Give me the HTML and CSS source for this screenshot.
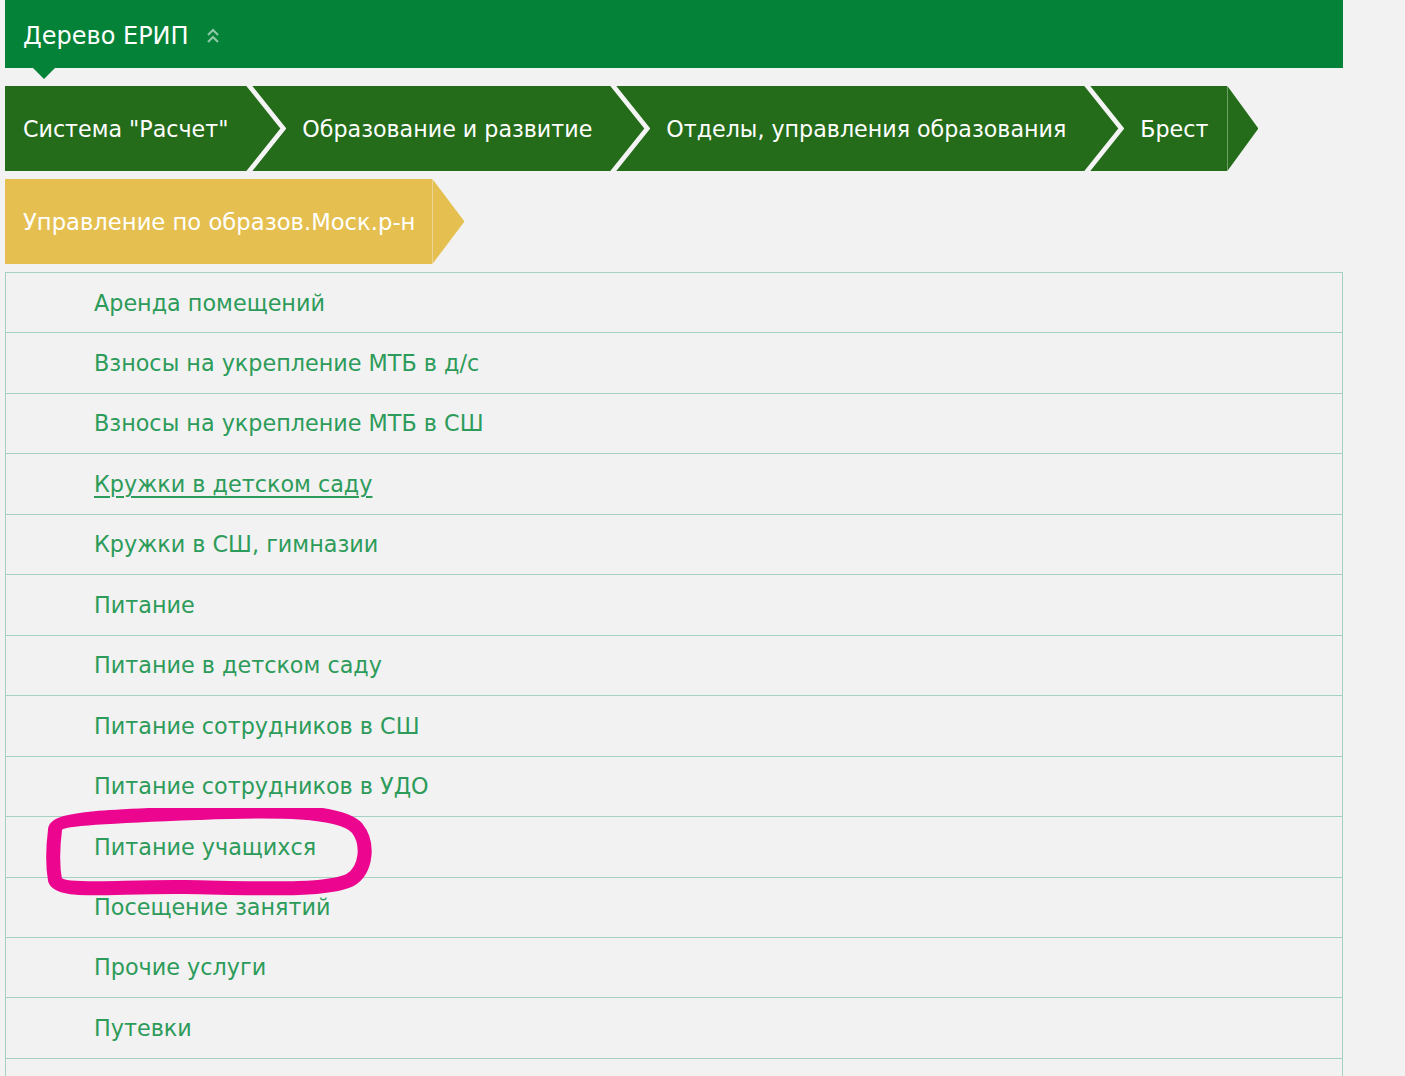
FILE: index.html
```html
<!DOCTYPE html>
<html lang="ru">
<head>
<meta charset="utf-8">
<title>Дерево ЕРИП</title>
<link rel="stylesheet" href="styles.css">
</head>
<body>
<div class="page">
  <div class="tree-header">
    <span class="tree-title">Дерево ЕРИП</span>
    <svg class="collapse-icon" width="14" height="16" viewBox="0 0 14 16" aria-hidden="true">
      <path d="M2 7 L7 2 L12 7" fill="none" stroke="currentColor" stroke-width="2.2"/>
      <path d="M2 14 L7 9 L12 14" fill="none" stroke="currentColor" stroke-width="2.2"/>
    </svg>
  </div>

  <ul class="crumbs">
    <li class="crumb">Система "Расчет"</li>
    <li class="crumb">Образование и развитие</li>
    <li class="crumb">Отделы, управления образования</li>
    <li class="crumb crumb-last">Брест</li>
  </ul>

  <div class="current">Управление по образов.Моск.р-н</div>

  <div class="list-wrap">
    <ul class="services">
      <li><a href="#">Аренда помещений</a></li>
      <li><a href="#">Взносы на укрепление МТБ в д/с</a></li>
      <li><a href="#">Взносы на укрепление МТБ в СШ</a></li>
      <li><a href="#" class="hover">Кружки в детском саду</a></li>
      <li><a href="#">Кружки в СШ, гимназии</a></li>
      <li><a href="#">Питание</a></li>
      <li><a href="#">Питание в детском саду</a></li>
      <li><a href="#">Питание сотрудников в СШ</a></li>
      <li><a href="#">Питание сотрудников в УДО</a></li>
      <li><a href="#">Питание учащихся</a></li>
      <li><a href="#">Посещение занятий</a></li>
      <li><a href="#">Прочие услуги</a></li>
      <li><a href="#">Путевки</a></li>
      <li class="empty"></li>
    </ul>
    <svg class="marker" width="400" height="120" viewBox="0 0 400 120" aria-hidden="true">
      <path d="M 50 22 C 50 10, 110 8, 195 5 C 270 2, 335 2, 352 20 C 364 35, 362 62, 345 72 C 320 84, 250 80, 180 79 C 110 78, 55 86, 50 72 C 47 55, 48 38, 50 22 Z" fill="none" stroke="#ec058f" stroke-width="14" stroke-linejoin="round"/>
    </svg>
  </div>
</div>
</body>
</html>
```
FILE: styles.css
```css
html, body {
  margin: 0;
  padding: 0;
  background: #f2f2f2;
}
body {
  font-family: "DejaVu Sans", Verdana, sans-serif;
  font-size: 22px;
}
.page {
  width: 1338px;
  margin-left: 5px;
}
.tree-header {
  position: relative;
  height: 68px;
  background: #048237;
  color: #fff;
  display: flex;
  align-items: center;
  padding-left: 18px;
  gap: 17px;
}
.tree-header::after {
  content: "";
  position: absolute;
  left: 28px;
  top: 68px;
  border-top: 11px solid #048237;
  border-left: 11px solid transparent;
  border-right: 11px solid transparent;
}
.tree-title {
  font-size: 24px;
  line-height: 1;
  margin-top: 3px;
}
.collapse-icon {
  color: rgba(255, 255, 255, 0.55);
  margin-top: 4px;
}
.crumbs {
  list-style: none;
  margin: 18px 0 0;
  padding: 0;
  display: flex;
}
.crumb {
  position: relative;
  height: 85px;
  display: flex;
  align-items: center;
  background: #246c1a;
  color: #fff;
  font-size: 22.2px;
  padding: 0 18px 0 56px;
  white-space: nowrap;
}
.crumb:first-child {
  padding-left: 18px;
}
.crumb::after {
  content: "";
  position: absolute;
  left: 100%;
  top: 0;
  width: 40px;
  height: 100%;
  background: #f4f4f4;
  clip-path: polygon(0 0, 6px 0, 40px 50%, 6px 100%, 0 100%, 34px 50%);
  z-index: 2;
}
.crumb-last {
  padding-right: 19px;
}
.crumb-last::after {
  width: 31px;
  background: #246c1a;
  clip-path: polygon(0 0, 31px 50%, 0 100%);
}
.current {
  position: relative;
  margin-top: 8px;
  height: 85px;
  width: max-content;
  display: flex;
  align-items: center;
  background: #e5bf50;
  color: #fff;
  font-size: 22.7px;
  padding: 0 17px 0 18px;
}
.current::after {
  content: "";
  position: absolute;
  left: 100%;
  top: 0;
  width: 32px;
  height: 100%;
  background: #e5bf50;
  clip-path: polygon(0 0, 32px 50%, 0 100%);
}
.list-wrap {
  position: relative;
  margin-top: 8px;
}
.services {
  list-style: none;
  margin: 0;
  padding: 0;
  border: 1px solid #a4d1c1;
  border-bottom: none;
}
.services li {
  border-bottom: 1px solid #a4d1c1;
  padding: 16.5px 0 15.5px 88px;
  line-height: 27.45px;
  font-size: 22.3px;
}
.services li.empty {
  height: 27.45px;
}
.services a {
  color: #2d9b5a;
  text-decoration: none;
}
.services a.hover {
  text-decoration: underline;
  text-underline-offset: 4px;
}
.marker {
  position: absolute;
  left: 0;
  top: 536px;
  pointer-events: none;
}
```
